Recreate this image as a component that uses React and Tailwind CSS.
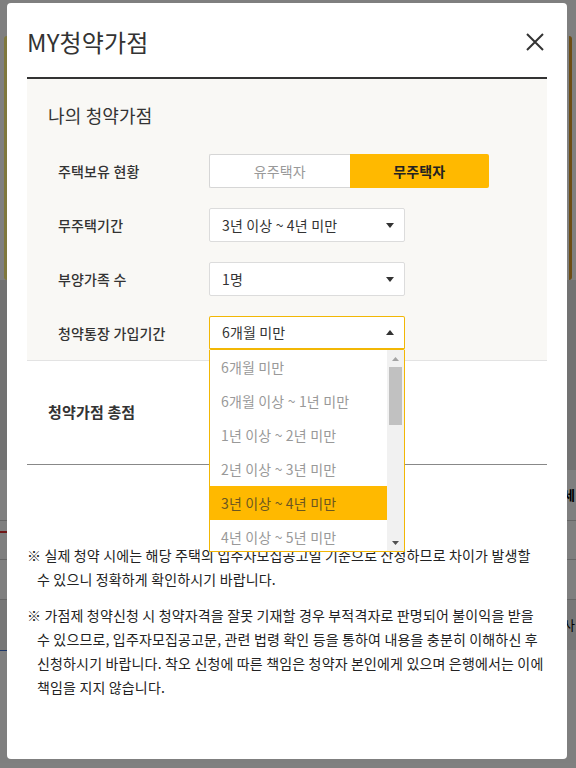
import React from "react";

const periodOptions = [
  "6개월 미만",
  "6개월 이상 ~ 1년 미만",
  "1년 이상 ~ 2년 미만",
  "2년 이상 ~ 3년 미만",
  "3년 이상 ~ 4년 미만",
  "4년 이상 ~ 5년 미만",
];

const Caret = ({ up }) => (
  <svg width="8" height="5" viewBox="0 0 8 5" className="shrink-0">
    {up ? <path d="M0 5 L4 0 L8 5 Z" fill="#333" /> : <path d="M0 0 L8 0 L4 5 Z" fill="#333" />}
  </svg>
);

const SelectBox = ({ value, open, children }) => (
  <div className="relative w-[196px]">
    <div
      className={`flex h-[34px] items-center justify-between rounded-[2px] bg-white pl-[12px] pr-[10px] text-[14px] text-[#333] ${
        open ? "border border-b-2 border-[#f2b705]" : "border border-[#dcdcdc]"
      }`}
    >
      <span>{value}</span>
      <Caret up={open} />
    </div>
    {children}
  </div>
);

const Row = ({ label, children }) => (
  <div className="flex h-[34px] items-center">
    <div className="w-[182px] pl-[31px] text-[14px] font-medium text-[#333]">{label}</div>
    {children}
  </div>
);

const Dropdown = () => (
  <div className="absolute left-0 top-full z-10 flex h-[202px] w-[196px] overflow-hidden border border-t-0 border-[#f2b705] bg-white">
    <div className="flex-1">
      {periodOptions.map((opt, i) => (
        <div
          key={opt}
          className={`flex h-[34px] shrink-0 items-center pl-[11px] text-[14px] ${
            i === 4 ? "bg-[#ffb900] text-[#6b5721]" : "text-[#999]"
          }`}
        >
          {opt}
        </div>
      ))}
    </div>
    <div className="flex w-[17px] flex-col items-center bg-[#f1f1f1]">
      <div className="flex h-[17px] items-center justify-center">
        <svg width="7" height="4" viewBox="0 0 7 4">
          <path d="M0 4 L3.5 0 L7 4 Z" fill="#a3a3a3" />
        </svg>
      </div>
      <div className="h-[58px] w-[13px] bg-[#c1c1c1]" />
      <div className="flex-1" />
      <div className="flex h-[17px] items-center justify-center">
        <svg width="7" height="4" viewBox="0 0 7 4">
          <path d="M0 0 L7 0 L3.5 4 Z" fill="#505050" />
        </svg>
      </div>
    </div>
  </div>
);

export default function App() {
  return (
    <div
      className="relative h-[768px] w-[576px] overflow-hidden bg-white tracking-[0.01em]"
      style={{ fontFamily: "'Noto Sans CJK KR', 'Noto Sans', sans-serif" }}
    >
      {/* page behind the overlay */}
      <div className="flex flex-col">
        <div className="h-[36px]" />
        <div className="mx-[4px] h-[244px] rounded-[3px] border-x-[3px] border-l-[#fff07a] border-r-[#d99a2b] bg-white" />
        <div className="h-[190px] bg-[#e4e4e4]" />
        <div className="flex h-[50px] items-center whitespace-nowrap pl-[563px] text-[13px] font-bold text-black">세</div>
        <div className="h-[40px] border-y border-[#ccc]">
          <div className="mt-[10px] h-[2px] w-[10px] bg-[#e03030]" />
        </div>
        <div className="h-[40px] border-b border-[#ccc]" />
        <div className="flex h-[50px] items-center whitespace-nowrap bg-[#eee] pl-[563px] text-[13px] text-black">
          사
        </div>
        <div className="h-[1px] w-[12px] bg-[#3a6fd0]" />
      </div>

      {/* dim layer */}
      <div className="absolute inset-0 bg-black/50" />

      {/* modal */}
      <div className="absolute left-[7px] top-[3px] flex h-[756px] w-[560px] flex-col rounded-[4px] bg-white px-[20px]">
        <div className="flex h-[74px] items-center justify-between pt-[4px]">
          <h1 className="text-[24px] font-normal text-[#333]">MY청약가점</h1>
          <svg width="18" height="18" viewBox="0 0 18 18" className="mr-[3px]">
            <path d="M1 1 L17 17 M17 1 L1 17" stroke="#333" strokeWidth="2" />
          </svg>
        </div>
        <div className="h-[2px] bg-[#333]" />

        <div className="flex flex-col border-b border-[#e3e3e3] bg-[#f9f8f5] pb-[10px] pt-[23px]">
          <h2 className="pl-[21px] text-[18px] font-normal leading-[26px] text-[#333]">나의 청약가점</h2>
          <div className="mt-[26px] flex flex-col gap-[20px]">
            <Row label="주택보유 현황">
              <div className="flex h-[34px] w-[280px] text-[14px]">
                <div className="flex flex-1 items-center justify-center rounded-l-[2px] border border-r-0 border-[#d6d6d6] bg-white text-[#999]">
                  유주택자
                </div>
                <div className="flex flex-1 items-center justify-center rounded-r-[2px] bg-[#ffb900] font-bold text-[#222]">
                  무주택자
                </div>
              </div>
            </Row>
            <Row label="무주택기간">
              <SelectBox value="3년 이상 ~ 4년 미만" />
            </Row>
            <Row label="부양가족 수">
              <SelectBox value="1명" />
            </Row>
            <Row label="청약통장 가입기간">
              <SelectBox value="6개월 미만" open>
                <Dropdown />
              </SelectBox>
            </Row>
          </div>
        </div>

        <div className="flex h-[104px] items-center border-b border-[#888] pl-[21px] text-[15px] font-bold text-[#333]">
          청약가점 총점
        </div>

        <div className="mt-[78px] flex flex-col gap-[12px] text-[14px] leading-[24px] text-[#222]">
          <p className="pl-[10px] -indent-[10px]">
            ※ 실제 청약 시에는 해당 주택의 입주자모집공고일 기준으로 산정하므로 차이가 발생할
            <br />
            수 있으니 정확하게 확인하시기 바랍니다.
          </p>
          <p className="pl-[10px] -indent-[10px]">
            ※ 가점제 청약신청 시 청약자격을 잘못 기재할 경우 부적격자로 판명되어 불이익을 받을
            <br />
            수 있으므로, 입주자모집공고문, 관련 법령 확인 등을 통하여 내용을 충분히 이해하신 후
            <br />
            신청하시기 바랍니다. 착오 신청에 따른 책임은 청약자 본인에게 있으며 은행에서는 이에
            <br />
            책임을 지지 않습니다.
          </p>
        </div>
      </div>
    </div>
  );
}
